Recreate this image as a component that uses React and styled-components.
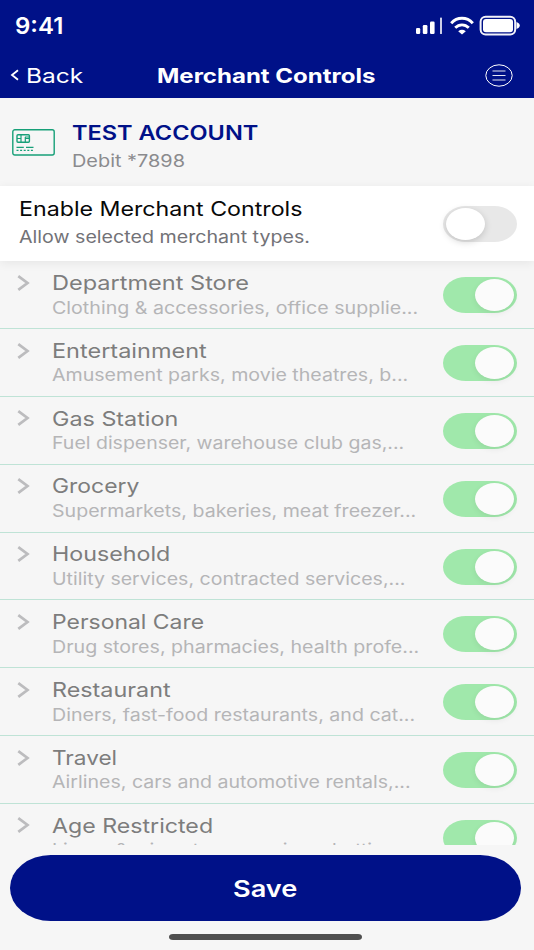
import { useLayoutEffect, useRef, useState } from 'react';
import styled, { createGlobalStyle } from 'styled-components';

const GlobalStyle = createGlobalStyle`
  * { box-sizing: border-box; }
  body {
    margin: 0;
    background: #f6f6f6;
    font-family: Inter, "Liberation Sans", sans-serif;
  }
`;

const Screen = styled.div`
  width: 534px;
  height: 950px;
  display: flex;
  flex-direction: column;
  overflow: hidden;
  background: #f6f6f6;
`;

const Header = styled.header`
  flex: none;
  height: 98.4px;
  background: #001188;
  color: #fff;
`;

const StatusBar = styled.div`
  height: 52px;
  padding: 0 14px 0 15px;
  display: flex;
  align-items: center;
  justify-content: space-between;
`;

const NavBar = styled.div`
  height: 46px;
  padding: 0 21.5px 0 10px;
  display: grid;
  grid-template-columns: 146.5px 1fr auto;
  align-items: center;
`;

const BackLink = styled.div`
  display: flex;
  align-items: center;
  gap: 7px;
`;

const Account = styled.section`
  flex: none;
  height: 87.6px;
  padding: 0 0 0 12px;
  display: flex;
  align-items: center;
  gap: 17px;
  background: #f6f6f6;
`;

const Lines = styled.div`
  display: flex;
  flex-direction: column;
  align-items: flex-start;
  gap: ${(p) => p.$gap || 0}px;
  padding-top: ${(p) => p.$top || 0}px;
  padding-bottom: ${(p) => p.$bottom || 0}px;
`;

const Master = styled.section`
  flex: none;
  height: 75.3px;
  padding: 0 17px 0 18.5px;
  display: flex;
  align-items: center;
  justify-content: space-between;
  background: #fff;
  box-shadow: 0 2px 10px rgba(0, 0, 0, 0.07);
  position: relative;
`;

const List = styled.main`
  flex: none;
  height: 584.2px;
  overflow: hidden;
`;

const Row = styled.div`
  height: 67.84px;
  padding: 0 17px 0 17px;
  display: grid;
  grid-template-columns: 34.5px 1fr auto;
  align-items: center;
  border-bottom: 1px solid #bfe3d6;
`;

const RowChevron = styled.svg`
  align-self: start;
  margin-top: 13.5px;
`;

const Switch = styled.div`
  width: 74px;
  height: 36px;
  margin-top: 1px;
  padding: 2px 3px;
  display: flex;
  justify-content: ${(p) => (p.$on ? 'flex-end' : 'flex-start')};
  border-radius: 23px / 18px;
  background: ${(p) => (p.$on ? '#a0e8ab' : '#e8e8e8')};
`;

const Knob = styled.div`
  width: 39px;
  height: 32px;
  border-radius: 50%;
  background: ${(p) => (p.$on ? '#fbfbfb' : '#fff')};
  box-shadow: ${(p) => (p.$on ? '0 2px 6px rgba(0, 0, 0, 0.07)' : '0 2px 7px rgba(0, 0, 0, 0.17)')};
`;

const Footer = styled.footer`
  flex: 1;
  padding: 9.5px 13px 0 10px;
  display: flex;
  flex-direction: column;
  align-items: center;
`;

const SaveButton = styled.button`
  width: 100%;
  height: 66.5px;
  padding: 1px 2px 0 0;
  display: flex;
  align-items: center;
  justify-content: center;
  border: none;
  border-radius: 41px / 33.25px;
  background: #001188;
  color: #fff;
  font-family: inherit;
`;

const HomeIndicator = styled.div`
  width: 193px;
  height: 6px;
  margin-top: 13px;
  border-radius: 4px / 3px;
  background: #4f4f4f;
`;

const Label = styled.div`
  height: ${(p) => p.$line || 24}px;
  line-height: ${(p) => p.$line || 24}px;
  font-size: ${(p) => p.$size || 20}px;
  font-weight: ${(p) => p.$weight || 400};
  color: ${(p) => p.$color || 'inherit'};
  text-align: left;
  white-space: nowrap;

  span {
    display: inline-block;
    transform-origin: left center;
  }
`;

// Wide lettering: the text is stretched sideways to the given width
function WideText({ width, children, ...rest }) {
  const ref = useRef(null);
  const [scale, setScale] = useState(1);

  useLayoutEffect(() => {
    setScale(width / ref.current.offsetWidth);
  }, [width, children]);

  return (
    <Label {...rest} style={{ width }}>
      <span ref={ref} style={{ transform: `scaleX(${scale})` }}>{children}</span>
    </Label>
  );
}

const categories = [
  { title: 'Department Store', w: 196.5, detail: 'Clothing & accessories, office supplie...', dw: 366 },
  { title: 'Entertainment', w: 155, detail: 'Amusement parks, movie theatres, b...', dw: 356 },
  { title: 'Gas Station', w: 126, detail: 'Fuel dispenser, warehouse club gas,...', dw: 352 },
  { title: 'Grocery', w: 87, detail: 'Supermarkets, bakeries, meat freezer...', dw: 364 },
  { title: 'Household', w: 118.5, detail: 'Utility services, contracted services,...', dw: 353 },
  { title: 'Personal Care', w: 152.5, detail: 'Drug stores, pharmacies, health profe...', dw: 367 },
  { title: 'Restaurant', w: 119, detail: 'Diners, fast-food restaurants, and cat...', dw: 363 },
  { title: 'Travel', w: 65.5, detail: 'Airlines, cars and automotive rentals,...', dw: 359 },
  { title: 'Age Restricted', w: 161, detail: 'Liquor & wine stores, casinos, betting,...', dw: 366 },
];

function Toggle({ on }) {
  return (
    <Switch $on={on}>
      <Knob $on={on} />
    </Switch>
  );
}

function StatusIcons() {
  return (
    <svg width="106" height="24" viewBox="0 0 106 24" fill="#fff">
      <rect x="2" y="14" width="4.2" height="6" rx="1.2" />
      <rect x="8.8" y="11" width="4.6" height="9" rx="1.2" />
      <rect x="16" y="7.5" width="4.6" height="12.5" rx="1.2" />
      <rect x="26.2" y="3.5" width="1.6" height="16.5" rx=".6" />
      <g fill="none" stroke="#fff" strokeWidth="2.9">
        <path d="M37.2 9.2C43.2 2.6 52.8 2.6 58.8 9.2" />
        <path d="M41.2 13.8C45.2 9.9 50.8 9.9 54.8 13.8" />
      </g>
      <path d="M44.2 17.2q3.8-2.8 7.6 0L48 20.6z" />
      <rect x="66.6" y="2.8" width="34.6" height="17.8" rx="5" fill="none" stroke="#fff" strokeWidth="2" strokeOpacity=".95" />
      <rect x="69" y="5" width="30" height="13.3" rx="3" />
      <path d="M102.5 8q3.3 1.2 3.3 3.5t-3.3 3.5z" />
    </svg>
  );
}

function CardIcon() {
  return (
    <svg width="43" height="27" viewBox="0 0 43 27" fill="none" stroke="#17a078">
      <rect x=".8" y=".8" width="41.4" height="25.2" rx="2" strokeWidth="1.4" />
      <rect x="5" y="5.7" width="12.4" height="7.6" rx="1" strokeWidth="1.4" />
      <path d="M5 9.5h4M13 9.5h4M9 5.5v8M13.3 8v5.5M13 8h4" strokeWidth="1.2" />
      <path d="M4.5 18.3h7.3M14 18.3h7.5" strokeWidth="1.2" />
      <path d="M4.5 21.3h17" strokeWidth="1.3" strokeDasharray="2 1.6" />
    </svg>
  );
}

export default function App() {
  return (
    <>
      <GlobalStyle />
      <Screen>
        <Header>
          <StatusBar>
            <WideText width={48} $size={22.5} $weight={600}>9:41</WideText>
            <StatusIcons />
          </StatusBar>
          <NavBar>
            <BackLink>
              <svg width="9" height="12" viewBox="0 0 9 12" fill="none" stroke="#fff" strokeWidth="1.8">
                <path d="M8 1.2L2 6l6 4.8" />
              </svg>
              <Lines $top={2}>
                <WideText width={57.5}>Back</WideText>
              </Lines>
            </BackLink>
            <Lines $top={2}>
              <WideText width={218.5} $weight={700}>Merchant Controls</WideText>
            </Lines>
            <svg width="28" height="23" viewBox="0 0 28 23" fill="none" stroke="#fff">
              <ellipse cx="14" cy="11.5" rx="13.2" ry="10.7" strokeWidth="1" />
              <path d="M7.5 7h13M7.5 11.5h13M7.5 16h13" strokeWidth=".9" />
            </svg>
          </NavBar>
        </Header>

        <Account>
          <CardIcon />
          <Lines $gap={4} $top={9}>
            <WideText width={186} $weight={600} $color="#001188">TEST ACCOUNT</WideText>
            <WideText width={113.5} $size={17} $color="#8b8b8e">Debit *7898</WideText>
          </Lines>
        </Account>

        <Master>
          <Lines $gap={4} $bottom={2}>
            <WideText width={283} $color="#080808">Enable Merchant Controls</WideText>
            <WideText width={291} $size={17} $color="#727277">Allow selected merchant types.</WideText>
          </Lines>
          <Toggle />
        </Master>

        <List>
          {categories.map(({ title, w, detail, dw }) => (
            <Row key={title}>
              <RowChevron width="13" height="16" viewBox="0 0 13 16" fill="none" stroke="#bcbcbe" strokeWidth="2.7">
                <path d="M1.3 1.2L10.5 8l-9.2 6.8" />
              </RowChevron>
              <Lines $top={1.2} $gap={0.6}>
                <WideText width={w} $color="#7d7d7d">{title}</WideText>
                <WideText width={dw} $size={17} $color="#b5b5b7">{detail}</WideText>
              </Lines>
              <Toggle on />
            </Row>
          ))}
        </List>

        <Footer>
          <SaveButton>
            <WideText width={64} $size={22.5} $weight={600} $line={28}>Save</WideText>
          </SaveButton>
          <HomeIndicator />
        </Footer>
      </Screen>
    </>
  );
}
